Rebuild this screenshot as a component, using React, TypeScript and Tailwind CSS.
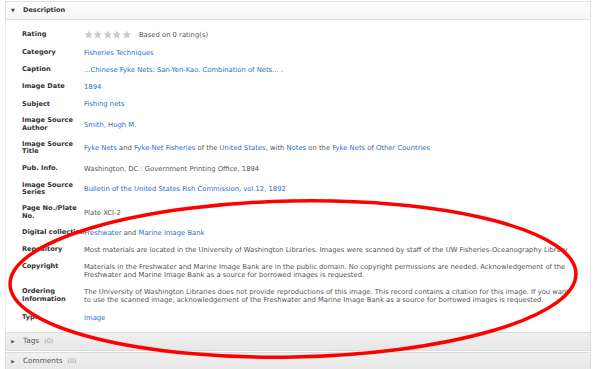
import React from 'react';

type Part = { text: string; link?: boolean };

interface Field {
  label: string[];
  value: Part[][];
}

const L = (text: string): Part => ({ text, link: true });
const T = (text: string): Part => ({ text });

const fields: Field[] = [
  { label: ['Category'], value: [[L('Fisheries Techniques')]] },
  { label: ['Caption'], value: [[L('...Chinese Fyke Nets: San-Yen-Kao. Combination of Nets... .')]] },
  { label: ['Image Date'], value: [[L('1894')]] },
  { label: ['Subject'], value: [[L('Fishing nets')]] },
  { label: ['Image Source', 'Author'], value: [[L('Smith, Hugh M.')]] },
  {
    label: ['Image Source', 'Title'],
    value: [[
      L('Fyke Nets'), T(' and '), L('Fyke-Net Fisheries'), T(' of the '), L('United States'),
      T(', with '), L('Notes'), T(' on the '), L('Fyke Nets'), T(' of '), L('Other Countries'),
    ]],
  },
  { label: ['Pub. Info.'], value: [[T('Washington, DC : Government Printing Office, 1894')]] },
  {
    label: ['Image Source', 'Series'],
    value: [[L('Bulletin of the'), T(' '), L('United States Fish Commission'), T(', '), L('vol.12, 1892')]],
  },
  { label: ['Page No./Plate', 'No.'], value: [[T('Plate XCI-2')]] },
  { label: ['Digital collection'], value: [[L('Freshwater'), T(' and '), L('Marine Image Bank')]] },
  {
    label: ['Repository'],
    value: [[T('Most materials are located in the University of Washington Libraries. Images were scanned by staff of the UW Fisheries-Oceanography Library')]],
  },
  {
    label: ['Copyright'],
    value: [
      [T('Materials in the Freshwater and Marine Image Bank are in the public domain. No copyright permissions are needed. Acknowledgement of the')],
      [T('Freshwater and Marine Image Bank as a source for borrowed images is requested.')],
    ],
  },
  {
    label: ['Ordering', 'Information'],
    value: [
      [T('The University of Washington Libraries does not provide reproductions of this image. This record contains a citation for this image. If you want')],
      [T('to use the scanned image, acknowledgement of the Freshwater and Marine Image Bank as a source for borrowed images is requested.')],
    ],
  },
  { label: ['Type'], value: [[L('Image')]] },
];

function Star() {
  return (
    <svg width="9.4" height="9.4" viewBox="0 0 24 24" className="shrink-0">
      <polygon
        points="12,1.5 15.1,8.4 22.5,9.1 16.9,14.1 18.5,21.5 12,17.7 5.5,21.5 7.1,14.1 1.5,9.1 8.9,8.4"
        fill="#c9c9c9"
      />
    </svg>
  );
}

function Row({ label, children, alignTop }: { label: string[]; children: React.ReactNode; alignTop?: boolean }) {
  return (
    <div className={`grid grid-cols-[62px_1fr] pt-[5px] pb-[4.2px] ${alignTop ? 'items-start' : 'items-center'}`}>
      <div className="font-bold text-[6.6px] text-[#333] overflow-hidden whitespace-nowrap leading-[7.2px]">
        {label.map((l) => (
          <div key={l}>{l}</div>
        ))}
      </div>
      <div className="text-[#555] text-[6.8px]">{children}</div>
    </div>
  );
}

function CollapsedBar({ title }: { title: string }) {
  return (
    <div className="flex items-center h-[19px] bg-gradient-to-b from-[#f0f0f0] to-[#e7e7e7] border border-[#dcdcdc] pl-[5px]">
      <span className="text-[5px] text-[#666] w-[12px]">&#9654;</span>
      <span className="text-[7.3px] text-[#555]">{title}</span>
      <span className="text-[6.4px] text-[#a0a0a0] ml-[5px]">(0)</span>
    </div>
  );
}

export default function App() {
  return (
    <div className="relative w-[600px] h-[369px] overflow-hidden bg-white font-['DejaVu_Sans',sans-serif]">
      <div className="ml-[5px] w-[586px] pt-[1px]">
        {/* Description header */}
        <div className="flex items-center h-[19px] bg-gradient-to-b from-[#fdfdfd] to-[#f6f6f6] border border-[#e1e1e1] pl-[5px]">
          <span className="text-[5px] text-[#444] w-[12px]">&#9660;</span>
          <span className="text-[6.5px] text-[#333] font-bold">Description</span>
        </div>

        {/* Fields */}
        <div className="border-x border-[#ececec] pl-[16px] pt-[5px] pb-[6px] leading-[8px]">
          <Row label={['Rating']}>
            <div className="flex items-center">
              <Star />
              <Star />
              <Star />
              <Star />
              <Star />
              <span className="ml-[8px]">Based on 0 rating(s)</span>
            </div>
          </Row>
          {fields.map((f) => (
            <Row key={f.label.join(' ')} label={f.label} alignTop={f.value.length > 1}>
              {f.value.map((line, i) => (
                <div key={i} className="whitespace-nowrap">
                  {line.map((p, j) =>
                    p.link ? (
                      <span key={j} className="text-[#2b6fc7]">{p.text}</span>
                    ) : (
                      <span key={j}>{p.text}</span>
                    ),
                  )}
                </div>
              ))}
            </Row>
          ))}
        </div>

        <div className="flex flex-col gap-[1px]">
          <CollapsedBar title="Tags" />
          <CollapsedBar title="Comments" />
        </div>
      </div>

      {/* red annotation ellipse drawn over the page */}
      <svg className="absolute inset-0 pointer-events-none" width="600" height="369" viewBox="0 0 600 369">
        <ellipse
          cx="293"
          cy="279"
          rx="283"
          ry="78"
          transform="rotate(-1.1 293 279)"
          fill="none"
          stroke="#ff0000"
          strokeWidth="3.5"
        />
      </svg>
    </div>
  );
}
